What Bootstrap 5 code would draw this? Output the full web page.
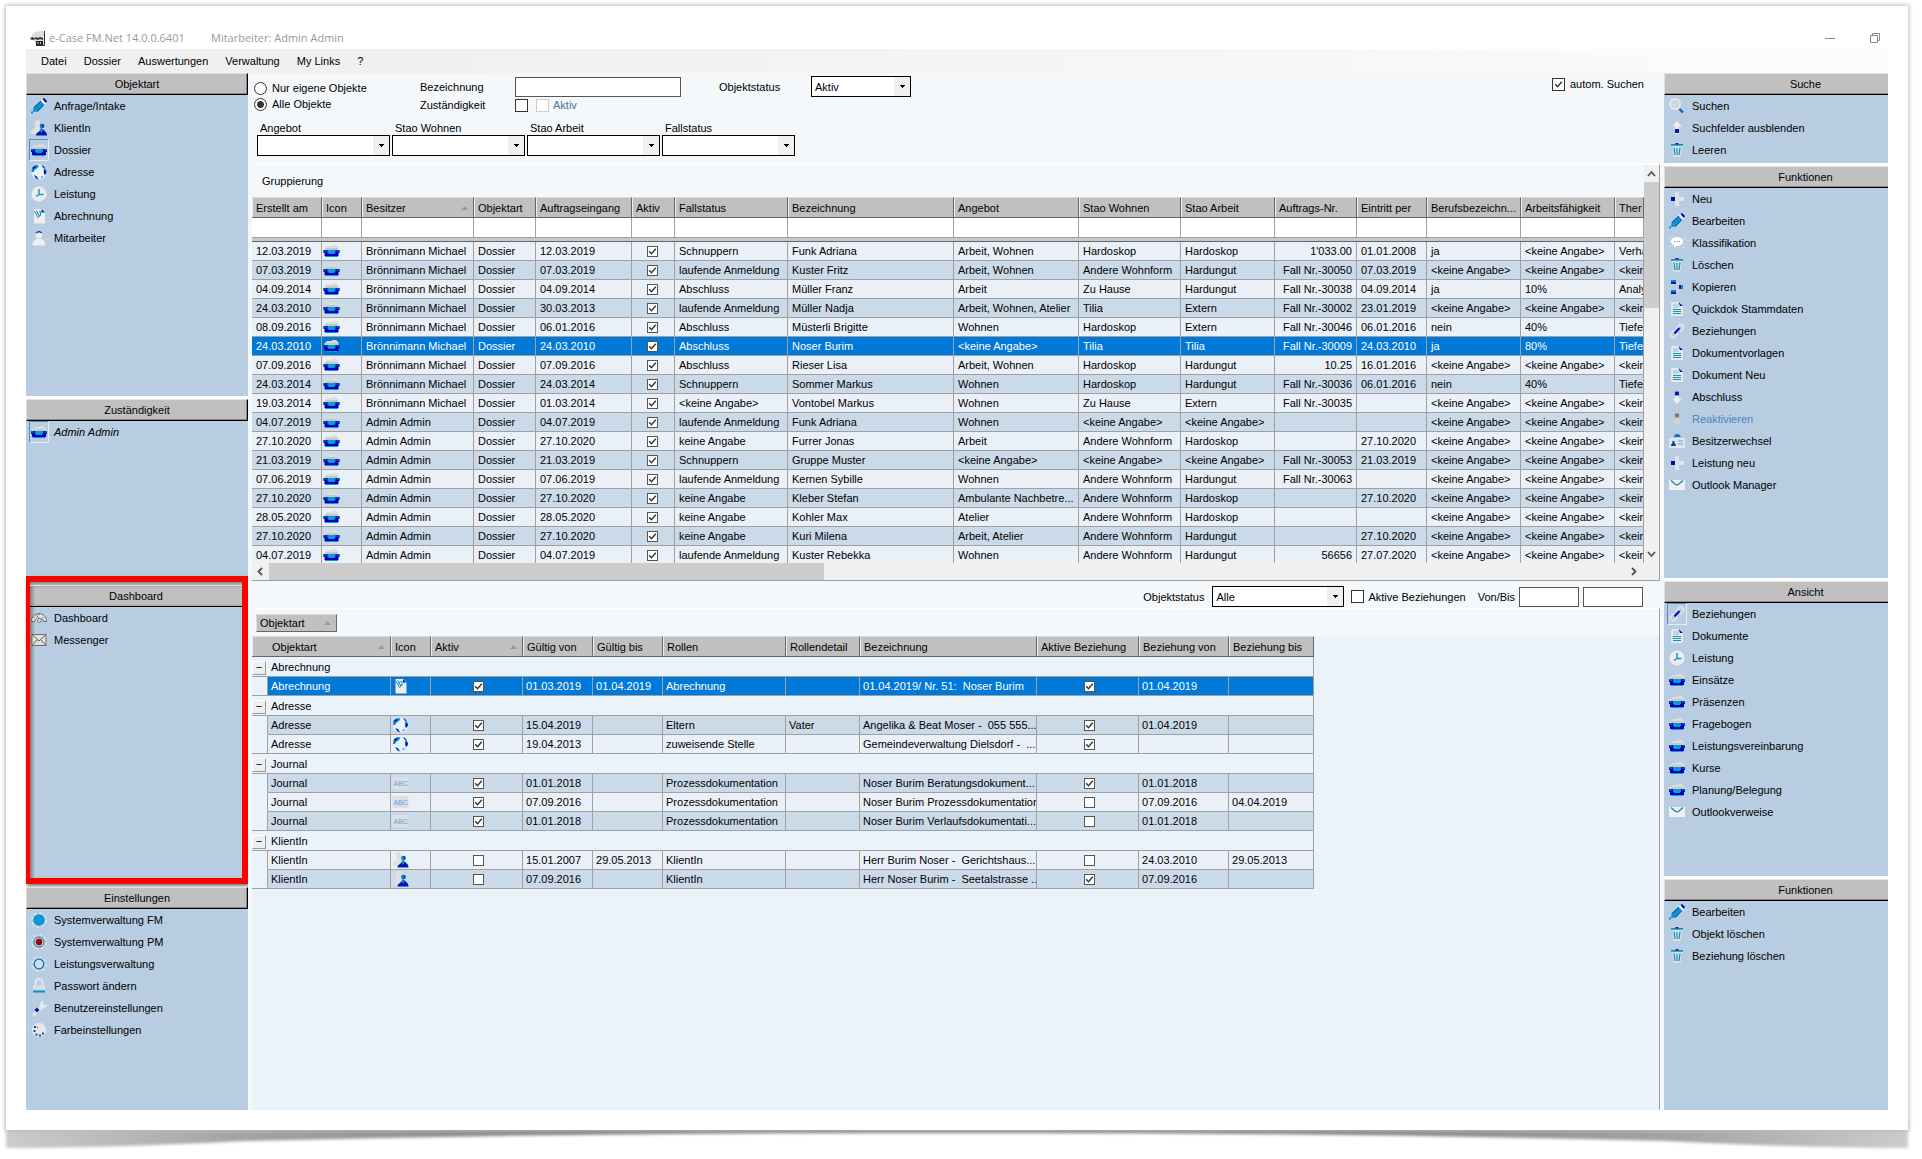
<!DOCTYPE html>
<html lang="de">
<head>
<meta charset="utf-8">
<meta name="viewport" content="width=device-width, initial-scale=1">
<title>e-Case FM.Net 14.0.0.6401</title>
<link href="https://cdn.jsdelivr.net/npm/bootstrap@5.3.0/dist/css/bootstrap.min.css" rel="stylesheet">
<style>
:root{--panel:#b8cce2;--pale:#f4f8fb;--odd:#e9f0f8;--even:#cbdae9;--sel:#0078d7;--line:#a0a0a0;--bar:#c0c0c0}
body{font-family:"Liberation Sans",Arial,sans-serif;font-size:11px;line-height:16px;color:#000;background:#fff}
a{color:inherit;text-decoration:none}
.page-wrap{min-height:100vh;padding:6px 14px 9px 6px}
.paper{padding:21px 20px 20px;box-shadow:0 0 4px 1px #bbb;position:relative;z-index:1;background:#fff}
.curl{height:20px;width:100%;overflow:visible}
.titlebar{height:22px;font:11px/22px "Open Sans","Noto Sans",sans-serif;color:#999}
.titlebar .app-name{margin-left:4px;width:162px}
.titlebar button{border:0;background:none;padding:0;line-height:0}
.titlebar .btn-min{margin-right:35px}
.menubar{height:24px;background:linear-gradient(90deg,#f0f0f0 20%,#fcfcfc);padding-left:15px;gap:17px}
.side{width:222px;gap:3px}
.side-r{width:224px;gap:3px}
.pane{background:var(--panel)}
.pane-title{height:22px;line-height:20px;font-size:11px;margin:0;font-weight:400;text-align:center;background:var(--bar);border:1px solid;border-color:#e0e0e0 #000 #000 #e0e0e0;box-shadow:inset -1px -1px #888}
.side-r .pane-title{padding-left:58px;border-right:0;box-shadow:inset 0 -1px #888}
.pane a{display:flex;align-items:center;height:22px;padding-left:3px;gap:5px;white-space:nowrap}
.ico-box{width:20px;height:22px;border:1px solid transparent;display:flex;align-items:center;justify-content:center}
.ico-box svg,.ico{width:16px;height:16px;display:block}
.picked .ico-box{border-color:#5b8abb #e6eef7 #e6eef7 #5b8abb}
.muted-item{color:#4f83bd!important}
.p-323{min-height:323px}.p-177{min-height:177px}.p-90{min-height:90px}.p-412{min-height:412px}.p-295{min-height:295px}
.pane-marked{min-height:308px;margin-top:-3px;border:6px solid #f00;border-left-width:4px;box-shadow:1px 2px 3px #777,inset 3px 2px 3px #888;padding-top:3px}
.pane-marked a{padding-left:0}
.pane-marked .pane-title{border-right:0;border-left:0;box-shadow:inset 3px 0 3px #888}
.pane-marked .ico-box{margin-left:-1px}
.center{background:var(--pale);padding-left:4px;min-width:0}
.filters{height:91px;padding:3px 20px 0 2px}
.filters label,.rel-bar label{white-space:nowrap}
.dim-label{color:#4a739c}
input[type=radio],input[type=checkbox]{appearance:none;margin:0;background:#fff no-repeat center;border:1px solid #333;width:13px;height:13px;flex:none;display:block}
input[type=radio]{border-radius:50%}
input[type=radio]:checked{background-image:radial-gradient(#333 0 3px,transparent 4px)}
input[type=checkbox]:checked{background-image:url("data:image/svg+xml,%3Csvg xmlns='http://www.w3.org/2000/svg' viewBox='0 0 9 9'%3E%3Cpath d='M1.2 4.2l2.3 2.5L7.8 1.8' fill='none' stroke='%23333' stroke-width='1.4'/%3E%3C/svg%3E");background-size:9px 9px}
input[type=checkbox]:disabled{border-color:#ccc}
td input[type=checkbox]{width:11px;height:11px;margin:auto;border-color:#555}
input[type=text]{height:20px;border:1px solid #555;background:#fff;padding:0 3px}
select{appearance:none;height:21px;border:1px solid #000;border-radius:0;color:#000;padding:0 3px;background:url("data:image/svg+xml,%3Csvg xmlns='http://www.w3.org/2000/svg' width='16' height='19'%3E%3Cpath d='M0 0h16v19H0z' fill='%23f0f0f0'/%3E%3Cpath d='M6 8h5v1h-1v1H9v1H8v-1H7V9H6z'/%3E%3C/svg%3E") no-repeat right center #fff}
.radio-col{width:166px}
.radio-col label,.auto-lab{gap:5px}
.label-col{width:95px}
.name-box{width:166px}
.status-lab{width:92px;margin-left:38px}
.w-status{width:100px}
.pick-row{gap:2px;padding:9px 0 0 3px}
.pick{width:133px;line-height:13px}
.pick label{padding-left:3px}
.grid-pane{border-top:1px solid #fff;border-right:1px solid var(--line);border-bottom:1px solid var(--line);margin-right:4px}
.group-zone{height:32px;line-height:32px;padding-left:10px}
.rows-view{height:366px;overflow:hidden}
table{table-layout:fixed;border-collapse:separate;border-spacing:0;width:100%}
th{font-weight:400;height:21px;background:var(--bar);border-right:1px solid #666;border-bottom:1px solid #666;border-top:1px solid #ddd;box-shadow:inset 1px 0 #eee;padding:0 0 0 4px;white-space:nowrap;overflow:hidden;line-height:18px}
th .up{float:right;margin:7px 5px 0 0;width:7px;height:4px}
td{height:19px;padding:0 1px 0 4px;border-right:1px solid var(--line);border-bottom:1px solid var(--line);white-space:nowrap;overflow:hidden;text-overflow:clip;line-height:18px}
td:has(input){padding:0 1px 0 0}
td .ico{width:17px;margin-left:-3px}
.filter-line td{background:#fff;height:20px}
.band td{height:4px;background:#c8c8c8;border-right:0;border-bottom:1px solid #666;padding:0;line-height:0}
.r-odd td{background:var(--odd)}.r-even td{background:var(--even)}
.r-sel td{background:var(--sel);color:#fff}
td.num{text-align:right;padding-right:4px}
.vbar{width:15px;background:#f0f0f0}
.vbar .thumb{height:126px;background:#cdcdcd}
.hbar{height:17px;background:#f0f0f0}
.hbar .thumb{width:555px;background:#cdcdcd}
.arr{width:17px;height:17px;flex:none}
.rel-bar{height:27px;padding:4px 21px 0 0}
.rel-bar select{margin-right:7px}
.rel-bar .w-alle{width:132px}
.rel-bar .w-date{width:60px}
.rel-pane{background:#eaf2fa;border-top:1px solid #fff;border-right:1px solid var(--line);margin-right:4px}
.rel-zone{height:27px;background:var(--pale);padding:5px 4px}
.group-chip{width:81px;height:18px;background:var(--bar);border:1px solid;border-color:#ddd #666 #666 #ddd;padding:0 5px 0 3px;line-height:15px}
.rel-table{width:1062px}
.rel-table th:first-child{padding-left:20px}
.rel-table td{background:inherit;padding-right:0;padding-left:3px}
.rel-table td .ico{margin-left:-2px}
.rel-table .r-odd{background:var(--odd)}.rel-table .r-even{background:var(--even)}.rel-table .r-sel{background:var(--sel)}
.rel-table td.indent{background:#eaf2fa;border-bottom-color:#eaf2fa;padding:0}
.rel-table td.indent-end{border-bottom-color:var(--line)}
.rel-table .group-row td{background:#eaf2fa;height:20px;padding:0}
.group-row button{width:14px;height:14px;padding:0;border:1px solid;border-color:#fff #999 #999 #fff;background:#eee;line-height:9px;font-size:11px;margin-right:5px;vertical-align:middle}
</style>
<script src="https://cdn.jsdelivr.net/npm/bootstrap@5.3.0/dist/js/bootstrap.bundle.min.js"></script>
</head>
<body>
<svg width="0" height="0" class="position-absolute" aria-hidden="true">
<symbol id="pencil" viewBox="0 0 16 16"><path d="M2.500 9.500 9.500 3l3.500 3.500-6.500 7-4.500.5z" fill="#0a93cf"/><path d="M3 9.500l7-6.500M6.500 13.500l6.500-7" stroke="#0a3cb4" fill="none"/><path d="M9.500 2.500l2-1.500 4 4-2 1.700z" fill="#f3f3f3"/><path d="M11.500 1l1.500-1 3 3-1.200 2z" fill="#0000b8"/><path d="M0 13.500h2v2H0z" fill="#0a93cf"/></symbol>
<symbol id="person" viewBox="0 0 16 16"><path d="M6.500 0C9 0 9.500 2 9 4.500 8.500 7 9 8 11 9v5H0c0-4 1-4.500 3.500-5.500C5 7.500 3.500 5.500 3.500 3.500 3.500 1 4.500 0 6.500 0z" fill="#e0e0e0"/><circle cx="11" cy="6" r="2.300" fill="#0048a8"/><path d="M9.500 4.500H11v7H9.500z" fill="#0a9fd0"/><path d="M5 15.500c0-3 3-3 4.500-6h3c1 2 3.500 2.500 3.500 6z" fill="#0018b8"/><path d="M9 10l1.500 3 1.500-3z" fill="#0a9fd0"/></symbol>
<symbol id="folder" viewBox="0 0 16 16"><path d="M1 5h1V4h1V3h5l1-1h4v1h1v1h1v3H1z" fill="#dcdcdc"/><path d="M2 5h12v2H2z" fill="#c4c8cc"/><path d="M0 7h16v3h-1v3h-1v1H2v-1H1v-3H0z" fill="#0000c0"/><path d="M0 7h3v2H0zM13 7h3v2h-3z" fill="#0050a0"/><path d="M4 7h8v3h-1v1H5v-1H4z" fill="#0a9ad0"/><path d="M2 13h12v1H2z" fill="#0a9ad0"/></symbol>
<symbol id="globe" viewBox="0 0 16 16"><circle cx="8" cy="8" r="7.500" fill="#e8f2f8"/><path d="M1 4l4-3 3 .5L6.500 4 4 5.500 2.500 8 .5 8zM10 .8l4 2.700 1.700 4.500-2.200 3-1-3.500.500-3zM3 11l3 1.500L8 15.500l-3-.7z" fill="#0a82c8"/><path d="M1.500 3.500 4 1.500 4.500 3.500 2.500 5zM13 6l2.500 1-1 3.500L13 10zM3 11l2.500 1.500V15zM11 1l2.500 2-1 1z" fill="#0010b8"/><path d="M10 12.500l2.500 0-2 2z" fill="#0a82c8"/></symbol>
<symbol id="clock" viewBox="0 0 16 16"><circle cx="8" cy="8" r="7.500" fill="#ececec"/><path d="M8 3v5.500h4.500M7.800 8.500 5 10.500" stroke="#0a9ac4" stroke-width="1.500" fill="none"/></symbol>
<symbol id="invoice" viewBox="0 0 16 16"><path d="M3 1h8l3 3v11.500H3z" fill="#eee"/><path d="M10.500 1 14 4.500h-3.500z" fill="#0018b8"/><path d="M3.500 3 7 9.500 8.500 8.500 5.500 2.500M6 4l1 2" stroke="#0a93c8" fill="none"/><path d="M8 3.500h1.500v4H8" stroke="#0a93c8" fill="none"/></symbol>
<symbol id="user" viewBox="0 0 16 16"><circle cx="8" cy="4.500" r="3.500" fill="#eee"/><path d="M4.500 4C5 0 11 0 11.500 4 9.500 2 6.500 2 4.500 4z" fill="#0028b0"/><path d="M1.500 15.500C1.500 11 4 10 6.500 8.500h3C12 10 14.500 11 14.500 15.500z" fill="#f0f0f0"/></symbol>
<symbol id="gauge" viewBox="0 0 16 16"><path d="M.5 11.500C.5 1 15.500 1 15.500 11.500h-3C12 9.500 11 8.500 10 8.500M3.500 11.500h-3M3.500 11.500C4 9.500 5 8.500 6 8.500" fill="#e2e2e2" stroke="#555" stroke-width=".8"/><circle cx="8.500" cy="10.500" r="1.800" fill="#eee" stroke="#555" stroke-width=".8"/><path d="M8 9 5.500 5M3 7l1 1M8 3.500V5M12.500 7l-1 1" stroke="#555" fill="none" stroke-width=".9"/></symbol>
<symbol id="mail0" viewBox="0 0 16 16"><path d="M1 2.500h14v11H1z" fill="#e0e0e0" stroke="#555" stroke-width=".8"/><path d="M1 2.500 8 9l7-6.500M1 13.500 6 8M15 13.500 10 8" fill="none" stroke="#555" stroke-width=".9"/></symbol>
<symbol id="gearblue" viewBox="0 0 16 16"><circle cx="8" cy="8" r="7" fill="none" stroke="#dfe4e8" stroke-width="1.500" stroke-dasharray="3 2.500"/><circle cx="8" cy="8" r="5.800" fill="#0a96d2"/></symbol>
<symbol id="gearred" viewBox="0 0 16 16"><circle cx="8" cy="8" r="7" fill="none" stroke="#dfe4e8" stroke-width="1.500" stroke-dasharray="3 2.500"/><circle cx="8" cy="8" r="4" fill="#a00008" stroke="#e0ecf4" stroke-width="1.200"/><circle cx="8" cy="8" r="5" fill="none" stroke="#06a" stroke-width=".9"/></symbol>
<symbol id="gearring" viewBox="0 0 16 16"><circle cx="8" cy="8" r="7" fill="none" stroke="#dfe4e8" stroke-width="1.500" stroke-dasharray="3 2.500"/><circle cx="8" cy="8" r="4.800" fill="#cdddec" stroke="#0a70c0" stroke-width="1.200"/></symbol>
<symbol id="lock" viewBox="0 0 16 16"><path d="M4.500 8V4c0-4 7-4 7 0v4" fill="none" stroke="#e6e6e6" stroke-width="1.800"/><path d="M2 7.500h12v4H2z" fill="#e0e0e0"/><path d="M2 12.500h12v2H2z" fill="#0a93cf"/></symbol>
<symbol id="wrench" viewBox="0 0 16 16"><path d="M1 15l8-9 .5-4L12 .5V4l2 1 2-1-1 3-3 1.500-9 7.500z" fill="#e8e8e8"/><path d="M6 7.500 8.500 10 6 12.500 3.500 10z" fill="#0018b8"/></symbol>
<symbol id="palette" viewBox="0 0 16 16"><circle cx="8" cy="8" r="7.200" fill="#e6e6e6"/><g fill="#0a50b8"><path d="M3 4h2v2H3zM2.500 8h2v2h-2zM4.500 11.500h2v2h-2zM8 12.500h2v2H8zM11 10.500h2v2h-2zM6 5h1v1H6z"/></g></symbol>
<symbol id="search" viewBox="0 0 16 16"><circle cx="6" cy="6" r="5" fill="#c6dced" stroke="#e9e9e9" stroke-width="1.800"/><circle cx="6" cy="6" r="3.500" fill="none" stroke="#cfcfcf"/><path d="M10.500 11 14 14.500" stroke="#0060c0" stroke-width="2.200"/></symbol>
<symbol id="up" viewBox="0 0 16 16"><path d="M8 1l5 5.500h-3V14H6V6.500H3z" fill="#ececec"/><path d="M6 9h4v4H6z" fill="#0018b8"/></symbol>
<symbol id="down" viewBox="0 0 16 16"><path d="M8 15l5-5.500h-3V2H6v7.500H3z" fill="#ececec"/><path d="M6 2.500h4v4H6z" fill="#0018b8"/></symbol>
<symbol id="downg" viewBox="0 0 16 16"><path d="M8 15l5-5.500h-3V2H6v7.500H3z" fill="#d2d2d2"/><path d="M6 2.500h4v4H6z" fill="#777"/></symbol>
<symbol id="trash" viewBox="0 0 16 16"><path d="M3 4h10l-1.500 11h-7z" fill="#dedede"/><path d="M2 2h12v1.700H2z" fill="#0a93c4"/><path d="M6.500 1h3v1.500h-3z" fill="#0030a0"/><path d="M5 5.500 6 13M8 6v7M11 5.500 10 13" stroke="#0a93c4" stroke-width="1.200"/></symbol>
<symbol id="plus" viewBox="0 0 16 16"><path d="M6 1h4v5h5v4h-5v5H6v-5H2V6h4z" fill="#dfe3e8"/><path d="M2 6h4v4H2z" fill="#0010b8"/></symbol>
<symbol id="speech" viewBox="0 0 16 16"><ellipse cx="8" cy="6.500" rx="6" ry="4.500" fill="#fff"/><path d="M5 10h3l-3 3z" fill="#fff"/><path d="M0 2h1v1H0zM0 11h1v1H0zM14 12h1v1h-1zM15 3h1v1h-1zM1 6h1v1H1z" fill="#fff"/><path d="M5 6h1v1H5zM7.500 6h1v1h-1zM10 6h1v1h-1z" fill="#668"/></symbol>
<symbol id="copy" viewBox="0 0 16 16"><path d="M2 1h5v4H2zM2 11h5v4H2zM10 6h4v4h-4z" fill="#0a86c8"/><path d="M2 3h5v2H2zM2 13h5v2H2zM10 6h2v4h-2z" fill="#0020b0"/><path d="M8 3h2v2H8zM8 11h2v2H8z" fill="#ddd"/></symbol>
<symbol id="doc" viewBox="0 0 16 16"><path d="M3 1h7l4 4v10H2V2z" fill="#e6e9ec"/><path d="M4 3h6v4H4z" fill="#b8d4ec"/><path d="M9.500 1 14 5h-3z" fill="#0010b8"/><path d="M4 8.500h8M4 10.500h8M4 12.500h8" stroke="#1494bc" fill="none"/></symbol>
<symbol id="link" viewBox="0 0 16 16"><path d="M7 6l3-4c2-2 6 1 4 3.500L11.500 9M9 10l-3 4C4 16 0 13 2 10.500L4.500 7.500" stroke="#e2e2e2" stroke-width="1.800" fill="none"/><path d="M5.500 10.500 10.500 5" stroke="#0010c0" stroke-width="2"/></symbol>
<symbol id="idcard" viewBox="0 0 16 16"><path d="M0 5h16v10H0z" fill="#dfe5ea"/><path d="M5 4 6 1l1 1 1-2 1 2 1-1 2 3z" fill="#0a70b8"/><path d="M2 13c0-2 1-2.500 1.500-3C2.500 7 6 7 5.500 10c.5.500 1.500 1 1.500 3z" fill="#0040a8"/><path d="M9 8h5M9 11h5" stroke="#5ac" /></symbol>
<symbol id="mail" viewBox="0 0 16 16"><path d="M0 3h16v10H0z" fill="#f0f0f0"/><path d="M2 3.500l4 3.500q2 1.500 4 0l4-3.500" stroke="#0a93b4" stroke-width="1.400" fill="none"/></symbol>
</svg>

<div class="page-wrap d-flex flex-column">
<main class="paper d-flex flex-column flex-grow-1">
  <header>
    <div class="titlebar d-flex align-items-center">
      <svg class="ms-1" width="15" height="15" viewBox="0 0 15 15"><path d="M1 6C2 2 6 0 14 0v15H6l-1-4-5-3z" fill="#dcdcdc"/><path d="M14.500 0v14.500H6" stroke="#333" fill="none"/><path d="M0 8l2-2 2 1h1l1-1 2 1 2-1 3 1v2l-3-1-2 1-3-1-2 1z" fill="#333"/><path d="M6 10h7v4H6z" fill="#222"/><path d="M8 11v2M10.500 11v2" stroke="#ccc"/></svg>
      <span class="app-name">e-Case FM.Net 14.0.0.6401</span><span>Mitarbeiter: Admin Admin</span>
      <button class="btn-min ms-auto" aria-label="Minimieren"><svg width="10" height="11"><path d="M0 5.500h10" stroke="#888"/></svg></button>
      <button class="me-2" aria-label="Wiederherstellen"><svg width="10" height="10"><path d="M.5 2.500h7v7h-7zM2.500 2V.5h7v7H8" fill="none" stroke="#888"/></svg></button>
    </div>
    <nav class="menubar d-flex align-items-center"><a href="#">Datei</a><a href="#">Dossier</a><a href="#">Auswertungen</a><a href="#">Verwaltung</a><a href="#">My Links</a><a href="#">?</a></nav>
  </header>
  <div class="d-flex flex-grow-1">
    <aside class="side d-flex flex-column flex-shrink-0">
      <section class="pane p-323"><h2 class="pane-title">Objektart</h2><nav data-list="objekt"></nav></section>
      <section class="pane p-177"><h2 class="pane-title">Zuständigkeit</h2><nav data-list="zust" class="fst-italic"></nav></section>
      <section class="pane pane-marked"><h2 class="pane-title">Dashboard</h2><nav data-list="dash"></nav></section>
      <section class="pane flex-grow-1"><h2 class="pane-title">Einstellungen</h2><nav data-list="einst"></nav></section>
    </aside>

    <div class="center flex-grow-1 d-flex flex-column">
      <form class="filters">
        <div class="d-flex align-items-start">
          <div class="radio-col">
            <label class="d-flex align-items-center pt-1"><input type="radio" name="own">Nur eigene Objekte</label>
            <label class="d-flex align-items-center"><input type="radio" name="own" checked>Alle Objekte</label>
          </div>
          <div>
            <div class="d-flex align-items-center"><label class="label-col" for="bez">Bezeichnung</label><input type="text" id="bez" class="name-box">
              <label class="status-lab" for="ost">Objektstatus</label><select id="ost" class="w-status"><option>Aktiv</option></select></div>
            <div class="d-flex align-items-center"><label class="label-col" for="zst">Zuständigkeit</label><input type="checkbox" id="zst" class="me-1"><label class="d-flex align-items-center gap-1 ms-1 dim-label"><input type="checkbox" disabled>Aktiv</label></div>
          </div>
          <label class="auto-lab d-flex align-items-center ms-auto"><input type="checkbox" checked>autom. Suchen</label>
        </div>
        <div class="d-flex pick-row">
          <div class="d-flex flex-column pick"><label for="f1">Angebot</label><select id="f1"></select></div>
          <div class="d-flex flex-column pick"><label for="f2">Stao Wohnen</label><select id="f2"></select></div>
          <div class="d-flex flex-column pick"><label for="f3">Stao Arbeit</label><select id="f3"></select></div>
          <div class="d-flex flex-column pick"><label for="f4">Fallstatus</label><select id="f4"></select></div>
        </div>
      </form>
      <section class="grid-pane">
        <div class="d-flex">
          <div class="flex-grow-1 overflow-hidden">
            <div class="group-zone">Gruppierung</div>
            <div class="rows-view"><table id="cases"></table></div>
          </div>
          <div class="vbar d-flex flex-column flex-shrink-0">
            <svg class="arr" viewBox="0 0 17 17"><path d="M4 11l3.500-4L11 11" fill="none" stroke="#555" stroke-width="1.800"/></svg>
            <div class="thumb"></div>
            <svg class="arr mt-auto" viewBox="0 0 17 17"><path d="M4 6l3.500 4L11 6" fill="none" stroke="#555" stroke-width="1.800"/></svg>
          </div>
        </div>
        <div class="hbar d-flex">
          <svg class="arr" viewBox="0 0 17 17"><path d="M10 5L6.500 8.500 10 12" fill="none" stroke="#555" stroke-width="1.800"/></svg>
          <div class="thumb"></div>
          <svg class="arr ms-auto me-3" viewBox="0 0 17 17"><path d="M6 5l3.500 3.500L6 12" fill="none" stroke="#555" stroke-width="1.800"/></svg>
        </div>
      </section>
      <form class="rel-bar d-flex align-items-center justify-content-end">
        <label for="ro" class="me-2">Objektstatus</label><select id="ro" class="w-alle"><option>Alle</option></select>
        <label class="d-flex align-items-center gap-1 me-2"><input type="checkbox">Aktive Beziehungen</label>
        <label for="von" class="ms-1 me-1">Von/Bis</label><input type="text" id="von" class="w-date"><input type="text" class="w-date ms-1" aria-label="Bis">
      </form>
      <section class="rel-pane flex-grow-1">
        <div class="rel-zone"><div class="group-chip d-flex justify-content-between align-items-center">Objektart<svg width="7" height="4"><path d="M0 4 3.500 0 7 4z" fill="#999"/></svg></div></div>
        <table id="relations" class="rel-table"></table>
      </section>
    </div>

    <aside class="side-r d-flex flex-column flex-shrink-0">
      <section class="pane p-90"><h2 class="pane-title">Suche</h2><nav data-list="suche"></nav></section>
      <section class="pane p-412"><h2 class="pane-title">Funktionen</h2><nav data-list="funk"></nav></section>
      <section class="pane p-295"><h2 class="pane-title">Ansicht</h2><nav data-list="ansicht"></nav></section>
      <section class="pane flex-grow-1"><h2 class="pane-title">Funktionen</h2><nav data-list="funk2"></nav></section>
    </aside>
  </div>
</main>
<svg class="curl" viewBox="0 0 1902 20" preserveAspectRatio="none" aria-hidden="true">
  <defs><linearGradient id="cg"><stop offset="0" stop-color="#ccc"/><stop offset=".12" stop-color="#a4a4a4"/><stop offset=".3" stop-color="#808080"/><stop offset=".7" stop-color="#808080"/><stop offset=".88" stop-color="#a4a4a4"/><stop offset="1" stop-color="#ccc"/></linearGradient><filter id="soft" x="-1%" width="102%" y="-50%" height="200%"><feGaussianBlur stdDeviation="1.500"/></filter></defs>
  <path d="M0-6H1902V18Q1800 18 1660 11 1300 2 951 3 600 2 240 11 100 18 0 18z" fill="url(#cg)" filter="url(#soft)"/>
</svg>
</div>

<script>
// Navigation entries: icon, caption, optional state class
const lists = {
  objekt: [["pencil","Anfrage/Intake"],["person","KlientIn"],["folder","Dossier","picked"],["globe","Adresse"],["clock","Leistung"],["invoice","Abrechnung"],["user","Mitarbeiter"]],
  zust: [["folder","Admin Admin","picked"]],
  dash: [["gauge","Dashboard"],["mail0","Messenger"]],
  einst: [["gearblue","Systemverwaltung FM"],["gearred","Systemverwaltung PM"],["gearring","Leistungsverwaltung"],["lock","Passwort ändern"],["wrench","Benutzereinstellungen"],["palette","Farbeinstellungen"]],
  suche: [["search","Suchen"],["up","Suchfelder ausblenden"],["trash","Leeren"]],
  funk: [["plus","Neu"],["pencil","Bearbeiten"],["speech","Klassifikation"],["trash","Löschen"],["copy","Kopieren"],["doc","Quickdok Stammdaten"],["link","Beziehungen"],["doc","Dokumentvorlagen"],["doc","Dokument Neu"],["down","Abschluss"],["downg","Reaktivieren","muted-item"],["idcard","Besitzerwechsel"],["plus","Leistung neu"],["mail","Outlook Manager"]],
  ansicht: [["link","Beziehungen","picked"],["doc","Dokumente"],["clock","Leistung"],["folder","Einsätze"],["folder","Präsenzen"],["folder","Fragebogen"],["folder","Leistungsvereinbarung"],["folder","Kurse"],["folder","Planung/Belegung"],["mail","Outlookverweise"]],
  funk2: [["pencil","Bearbeiten"],["trash","Objekt löschen"],["trash","Beziehung löschen"]]
};
// The journal icon carries lettering, so it is drawn in place
const abcIcon = '<svg class="ico" viewBox="0 0 16 16"><rect y="2" width="16" height="12" rx="1" fill="#dcdfe3"/><text x="1" y="11" font-size="7" fill="#5fa4dc">ABC</text></svg>';
const icon = n => n == "abc" ? abcIcon : `<svg class="ico" aria-hidden="true"><use href="#${n}"/></svg>`;
document.querySelectorAll("[data-list]").forEach(n => {
  n.innerHTML = lists[n.dataset.list].map(([i, t, c]) => `<a href="#" class="${c || ""}"><span class="ico-box">${icon(i)}</span>${t}</a>`).join("");
});
const esc = s => s.replace(/&/g, "&amp;").replace(/</g, "&lt;").replace(/ {2}/g, "&nbsp; ");
const tri = '<svg class="up"><path d="M0 4 3.500 0 7 4z" fill="#999"/></svg>';
const box = on => `<input type="checkbox" aria-label="Aktiv"${on ? " checked" : ""}>`;
const cols = w => "<colgroup>" + w.map(x => x ? `<col width="${x}">` : "<col>").join("") + "</colgroup>";

// Case list; "-" stands for an unspecified value
const B = "Brönnimann Michael", A = "Admin Admin", W = "Wohnen", AW = "Andere Wohnform", HS = "Hardoskop", HG = "Hardungut";
const cases = [
["12.03.2019",B,"12.03.2019","Schnuppern","Funk Adriana","Arbeit, Wohnen",HS,HS,"1'033.00","01.01.2008","ja","-","Verha"],
["07.03.2019",B,"07.03.2019","laufende Anmeldung","Kuster Fritz","Arbeit, Wohnen",AW,HG,"Fall Nr.-30050","07.03.2019","-","-","<kein"],
["04.09.2014",B,"04.09.2014","Abschluss","Müller Franz","Arbeit","Zu Hause",HG,"Fall Nr.-30038","04.09.2014","ja","10%","Analy"],
["24.03.2010",B,"30.03.2013","laufende Anmeldung","Müller Nadja","Arbeit, Wohnen, Atelier","Tilia","Extern","Fall Nr.-30002","23.01.2019","-","-","<kein"],
["08.09.2016",B,"06.01.2016","Abschluss","Müsterli Brigitte",W,HS,"Extern","Fall Nr.-30046","06.01.2016","nein","40%","Tiefe"],
["24.03.2010",B,"24.03.2010","Abschluss","Noser Burim","-","Tilia","Tilia","Fall Nr.-30009","24.03.2010","ja","80%","Tiefe"],
["07.09.2016",B,"07.09.2016","Abschluss","Rieser Lisa","Arbeit, Wohnen",HS,HG,"10.25","16.01.2016","-","-","<kein"],
["24.03.2014",B,"24.03.2014","Schnuppern","Sommer Markus",W,HS,HG,"Fall Nr.-30036","06.01.2016","nein","40%","Tiefe"],
["19.03.2014",B,"01.03.2014","-","Vontobel Markus",W,"Zu Hause","Extern","Fall Nr.-30035","","-","-","<kein"],
["04.07.2019",A,"04.07.2019","laufende Anmeldung","Funk Adriana",W,"-","-","","","-","-","<kein"],
["27.10.2020",A,"27.10.2020","keine Angabe","Furrer Jonas","Arbeit",AW,HS,"","27.10.2020","-","-","<kein"],
["21.03.2019",A,"21.03.2019","Schnuppern","Gruppe Muster","-","-","-","Fall Nr.-30053","21.03.2019","-","-","<kein"],
["07.06.2019",A,"07.06.2019","laufende Anmeldung","Kernen Sybille",W,AW,HG,"Fall Nr.-30063","","-","-","<kein"],
["27.10.2020",A,"27.10.2020","keine Angabe","Kleber Stefan","Ambulante Nachbetre...",AW,HS,"","27.10.2020","-","-","<kein"],
["28.05.2020",A,"28.05.2020","keine Angabe","Kohler Max","Atelier",AW,HS,"","","-","-","<kein"],
["27.10.2020",A,"27.10.2020","keine Angabe","Kuri Milena","Arbeit, Atelier",AW,HG,"","27.10.2020","-","-","<kein"],
["04.07.2019",A,"04.07.2019","laufende Anmeldung","Kuster Rebekka",W,AW,HG,"56656","27.07.2020","-","-","<kein"]];
const heads = ["Erstellt am","Icon","Besitzer","Objektart","Auftragseingang","Aktiv","Fallstatus","Bezeichnung","Angebot","Stao Wohnen","Stao Arbeit","Auftrags-Nr.","Eintritt per","Berufsbezeichn...","Arbeitsfähigkeit","Ther"];
document.getElementById("cases").innerHTML = cols([70,40,112,62,96,43,113,166,125,102,94,82,70,94,94,0]) +
  "<thead><tr>" + heads.map((h, i) => `<th>${i == 2 ? tri : ""}${h}</th>`).join("") + "</tr></thead><tbody>" +
  '<tr class="filter-line">' + "<td></td>".repeat(16) + '</tr><tr class="band"><td colspan="16"></td></tr>' +
  cases.map((r, n) => {
    const c = r.map(v => v == "-" ? "<keine Angabe>" : v).map(esc);
    const cells = [c[0], icon("folder"), c[1], "Dossier", c[2], box(1), ...c.slice(3)];
    return `<tr class="${n == 5 ? "r-sel" : n % 2 ? "r-even" : "r-odd"}">` + cells.map((v, i) => `<td${i == 11 ? ' class="num"' : ""}>${v}</td>`).join("") + "</tr>";
  }).join("") + "</tbody>";

// Related objects, grouped by object type
const P = "Prozessdokumentation";
const groups = [
["Abrechnung","invoice",[["r-sel",1,"01.03.2019","01.04.2019","Abrechnung","","01.04.2019/ Nr. 51:  Noser Burim",1,"01.04.2019",""]]],
["Adresse","globe",[["r-even",1,"15.04.2019","","Eltern","Vater","Angelika & Beat Moser -  055 555...",1,"01.04.2019",""],["r-odd",1,"19.04.2013","","zuweisende Stelle","","Gemeindeverwaltung Dielsdorf -  ...",1,"",""]]],
["Journal","abc",[["r-even",1,"01.01.2018","",P,"","Noser Burim Beratungsdokument...",1,"01.01.2018",""],["r-odd",1,"07.09.2016","",P,"","Noser Burim Prozessdokumentation",0,"07.09.2016","04.04.2019"],["r-even",1,"01.01.2018","",P,"","Noser Burim Verlaufsdokumentati...",0,"01.01.2018",""]]],
["KlientIn","person",[["r-odd",0,"15.01.2007","29.05.2013","KlientIn","","Herr Burim Noser -  Gerichtshaus...",0,"24.03.2010","29.05.2013"],["r-even",0,"07.09.2016","","KlientIn","","Herr Noser Burim -  Seetalstrasse ...",1,"07.09.2016",""]]]];
const rh = ["Objektart","Icon","Aktiv","Gültig von","Gültig bis","Rollen","Rollendetail","Bezeichnung","Aktive Beziehung","Beziehung von","Beziehung bis"];
document.getElementById("relations").innerHTML = cols([16,123,40,92,70,70,123,74,177,102,90,85]) +
  "<thead><tr>" + rh.map((h, i) => `<th${i ? "" : ' colspan="2"'}>${i == 0 || i == 2 ? tri : ""}${h}</th>`).join("") + "</tr></thead><tbody>" +
  groups.map(([g, ic, rows]) => `<tr class="group-row"><td colspan="12"><button type="button" aria-label="Gruppe ${g} zuklappen">−</button>${g}</td></tr>` +
    rows.map((r, k) => `<tr class="${r[0]}"><td class="indent${k == rows.length - 1 ? " indent-end" : ""}"></td>` +
      [g, icon(ic), box(r[1]), r[2], r[3], r[4], r[5], esc(r[6]), box(r[7]), r[8], r[9]].map(v => `<td>${v}</td>`).join("") + "</tr>").join("")).join("") + "</tbody>";
</script>
</body>
</html>
